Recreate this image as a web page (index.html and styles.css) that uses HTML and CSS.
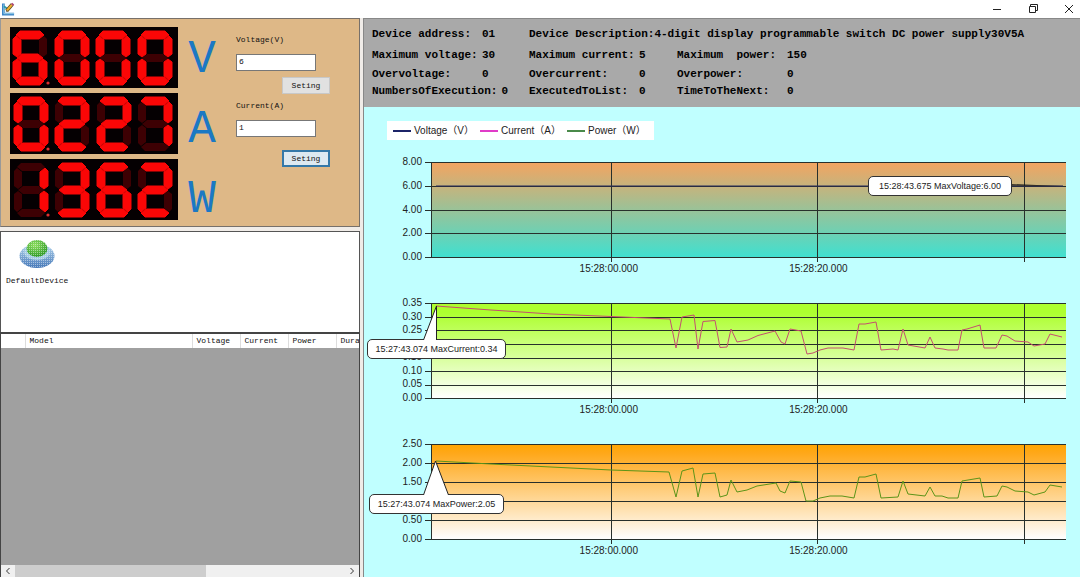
FILE: index.html
```html
<!DOCTYPE html>
<html lang="en">
<head>
<meta charset="utf-8">
<title>Power supply monitor</title>
<link rel="stylesheet" href="styles.css">
</head>
<body>
<svg class="defs" aria-hidden="true">
  <defs>
    <path id="sa" d="M3 4L7 0H27L31 4L26 8H8Z"/>
    <path id="sb" d="M34 8L31 5L26 9V23L30 26L34 23Z"/>
    <path id="sc" d="M34 31L30 28L26 31V45L31 49L34 46Z"/>
    <path id="sd" d="M3 50L7 54H27L31 50L26 46H8Z"/>
    <path id="se" d="M0 31L4 28L8 31V45L3 49L0 46Z"/>
    <path id="sf" d="M0 8L3 5L8 9V23L4 26L0 23Z"/>
    <path id="sg" d="M4 27L9 23H25L30 27L25 31H9Z"/>
    <g id="off" fill="#3d0003"><use href="#sa"/><use href="#sb"/><use href="#sc"/><use href="#sd"/><use href="#se"/><use href="#sf"/><use href="#sg"/></g>
    <g id="n0"><use href="#off"/><g fill="#fb0606" stroke="#fb0606"><use href="#sa"/><use href="#sb"/><use href="#sc"/><use href="#sd"/><use href="#se"/><use href="#sf"/></g></g>
    <g id="n1"><use href="#off"/><g fill="#fb0606" stroke="#fb0606"><use href="#sb"/><use href="#sc"/></g></g>
    <g id="n2"><use href="#off"/><g fill="#fb0606" stroke="#fb0606"><use href="#sa"/><use href="#sb"/><use href="#sg"/><use href="#se"/><use href="#sd"/></g></g>
    <g id="n3"><use href="#off"/><g fill="#fb0606" stroke="#fb0606"><use href="#sa"/><use href="#sb"/><use href="#sg"/><use href="#sc"/><use href="#sd"/></g></g>
    <g id="n6"><use href="#off"/><g fill="#fb0606" stroke="#fb0606"><use href="#sa"/><use href="#sf"/><use href="#sg"/><use href="#se"/><use href="#sc"/><use href="#sd"/></g></g>
    <g id="n7"><use href="#off"/><g fill="#fb0606" stroke="#fb0606"><use href="#sa"/><use href="#sb"/><use href="#sc"/></g></g>
    <circle id="dot" cx="38" cy="56" r="1.6" fill="#e03030"/>
  </defs>
</svg>

<div class="app">
  <header class="titlebar">
    <svg class="app-icon" viewBox="0 0 14 14" aria-hidden="true">
      <path d="M1.500 1V12.500H13" fill="none" stroke="#3c86c8" stroke-width="3"/>
      <path d="M2 2V12H13" fill="none" stroke="#9ad0e8" stroke-width="1"/>
      <path d="M2 4L6 7" stroke="#2c9aa8" stroke-width="2"/>
      <path d="M5 9L11 2" stroke="#5c4a20" stroke-width="4"/>
      <path d="M5 9L11 2" stroke="#f0b030" stroke-width="2.4"/>
      <path d="M10.300 1L12.500 3" stroke="#b04878" stroke-width="2"/>
      <path d="M4 10L5 8L6.500 9.500Z" fill="#333"/>
    </svg>
    <div class="window-buttons">
      <button type="button" aria-label="Minimize"><svg viewBox="0 0 10 10"><path d="M1 5.500H9"/></svg></button>
      <button type="button" aria-label="Restore"><svg viewBox="0 0 10 10"><path d="M1.500 2.500H7.500V8.500H1.500ZM2.500 2.500V0.500H9.500V6.500H7.500"/></svg></button>
      <button type="button" aria-label="Close"><svg viewBox="0 0 10 10"><path d="M1 1L9 9M9 1L1 9"/></svg></button>
    </div>
  </header>

  <main class="workspace">
    <div class="left">
      <section class="control">
        <div class="displays">
          <svg class="display" viewBox="0 0 168 61" role="img" aria-label="6.000 volts"><use href="#n6" x="3" y="4"/><use href="#n0" x="45" y="4"/><use href="#n0" x="86" y="4"/><use href="#n0" x="128" y="4"/><use href="#dot"/></svg>
          <svg class="display" viewBox="0 0 168 61" role="img" aria-label="0.227 amperes"><use href="#n0" x="4" y="4"/><use href="#n2" x="45" y="4"/><use href="#n2" x="87" y="4"/><use href="#n7" x="128" y="4"/><use href="#dot"/></svg>
          <svg class="display" viewBox="0 0 168 61" role="img" aria-label="1.362 watts"><use href="#n1" x="4" y="4"/><use href="#n3" x="45" y="4"/><use href="#n6" x="87" y="4"/><use href="#n2" x="128" y="4"/><use href="#dot"/></svg>
        </div>
        <div class="units"><span>V</span><span>A</span><span>W</span></div>
        <div class="settings">
          <form class="setting">
            <label for="voltage">Voltage(V)</label>
            <input id="voltage" type="text" value="6">
            <button type="button">Seting</button>
          </form>
          <form class="setting current">
            <label for="current">Current(A)</label>
            <input id="current" type="text" value="1">
            <button type="button" class="focused">Seting</button>
          </form>
        </div>
      </section>

      <section class="devices">
        <div class="device">
          <svg class="device-icon" viewBox="0 0 36 30" aria-hidden="true">
            <defs>
              <radialGradient id="dome" cx=".4" cy=".3" r=".7"><stop offset="0" stop-color="#8fe060"/><stop offset="1" stop-color="#2f9a28"/></radialGradient>
              <linearGradient id="disc" x2="0" y2="1"><stop offset="0" stop-color="#b4d6ee"/><stop offset="1" stop-color="#4678b8"/></linearGradient>
              <pattern id="dither" width="2" height="2" patternUnits="userSpaceOnUse"><rect width="1" height="1" fill="#fff" opacity=".45"/></pattern>
            </defs>
            <ellipse cx="18" cy="16" rx="17.500" ry="12" fill="url(#disc)"/>
            <ellipse cx="18" cy="12" rx="13" ry="8" fill="#a4cbe4"/>
            <ellipse cx="18" cy="8.500" rx="10.500" ry="8.500" fill="url(#dome)"/>
            <rect width="36" height="30" fill="url(#dither)"/>
          </svg>
          <span>DefaultDevice</span>
        </div>
      </section>

      <section class="program">
        <div class="table-view">
          <table>
            <thead><tr><th class="c-index"></th><th class="c-model">Model</th><th class="c-value">Voltage</th><th class="c-value">Current</th><th class="c-value">Power</th><th class="c-last">Duration</th></tr></thead>
          </table>
        </div>
        <div class="scrollbar">
          <button type="button" aria-label="Scroll left"><svg viewBox="0 0 8 8"><path d="M5.500 1L2.500 4L5.500 7"/></svg></button>
          <div class="track"><div class="thumb"></div></div>
          <button type="button" aria-label="Scroll right"><svg viewBox="0 0 8 8"><path d="M2.500 1L5.500 4L2.500 7"/></svg></button>
        </div>
      </section>
    </div>

    <div class="right">
      <dl class="info">
        <div><dt>Device address:</dt><dd>01</dd></div>
        <div class="wide"><dt>Device Description:</dt><dd>4-digit display programmable switch DC power supply30V5A</dd></div>
        <div><dt>Maximum voltage:</dt><dd>30</dd></div>
        <div><dt>Maximum current:</dt><dd>5</dd></div>
        <div><dt>Maximum&nbsp; power:</dt><dd>150</dd></div>
        <div><dt>Overvoltage:</dt><dd>0</dd></div>
        <div><dt>Overcurrent:</dt><dd>0</dd></div>
        <div><dt>Overpower:</dt><dd>0</dd></div>
        <div><dt>NumbersOfExecution:</dt><dd>0</dd></div>
        <div><dt>ExecutedToList:</dt><dd>0</dd></div>
        <div><dt>TimeToTheNext:</dt><dd>0</dd></div>
      </dl>

      <div class="charts">
        <ul class="legend">
          <li class="k-voltage">Voltage（V）</li>
          <li class="k-current">Current（A）</li>
          <li class="k-power">Power（W）</li>
        </ul>

        <section class="chart voltage">
          <ol class="y-axis"><li>8.00</li><li>6.00</li><li>4.00</li><li>2.00</li><li>0.00</li></ol>
          <div class="plot">
            <svg class="graph" viewBox="0 0 635 95" preserveAspectRatio="none">
              <path class="grid" d="M-6 0H635M-6 24H635M-6 48H635M-6 71H635M-6 95H635M0 0V95M180 0V100M386 0V100M593 0V100"/>
              <path class="series s-voltage" d="M5 24H632"/>
              <path class="wedge" d="M575 22L633 24L575 23.500Z"/>
            </svg>
            <div class="callout">15:28:43.675 MaxVoltage:6.00</div>
          </div>
          <div class="x-axis"><span>15:28:00.000</span><span>15:28:20.000</span></div>
        </section>

        <section class="chart current-chart">
          <ol class="y-axis"><li>0.35</li><li>0.30</li><li>0.25</li><li>0.20</li><li>0.15</li><li>0.10</li><li>0.05</li><li>0.00</li></ol>
          <div class="plot">
            <svg class="graph" viewBox="0 0 635 95" preserveAspectRatio="none">
              <path class="grid" d="M-6 0H635M-6 14H635M-6 27H635M-6 41H635M-6 55H635M-6 68H635M-6 82H635M-6 95H635M0 0V95M180 0V100M386 0V100M593 0V100"/>
              <path class="series s-current" d="M5 3L60 7L120 11L180 13.500L239 16L245 45L251 14L263 12L267 46L272 18.500L284 17.500L289 44.500L296 44L300 26L306 39L317 37L327 32.500L344 28L350 39L354 41L359 26L370 28L376 51L382 50L389 47L397 45H412L423 47L428 21L434 21L445 19L450 47L462 46L467 47L472 26L477 42L494 45L499 34L504 45L512 46L517 47H527L531 27L536 26L549 22L553 45H565L571 32L576 33L584 38L597 39L603 43L614 41L619 31L631 34"/>
            </svg>
            <div class="callout">15:27:43.074 MaxCurrent:0.34</div>
            <svg class="tail" viewBox="0 0 26 34"><path d="M0.500 34L13.500 0L13.500 34"/></svg>
          </div>
          <div class="x-axis"><span>15:28:00.000</span><span>15:28:20.000</span></div>
        </section>

        <section class="chart power">
          <ol class="y-axis"><li>2.50</li><li>2.00</li><li>1.50</li><li>1.00</li><li>0.50</li><li>0.00</li></ol>
          <div class="plot">
            <svg class="graph" viewBox="0 0 635 95" preserveAspectRatio="none">
              <path class="grid" d="M-6 0H635M-6 19H635M-6 38H635M-6 57H635M-6 76H635M-6 95H635M0 0V95M180 0V100M386 0V100M593 0V100"/>
              <path class="series s-power" d="M5 17L60 20L120 23L180 26L238 28L245 53L251 27L262 24L267 53L272 30L284 29L289 53L296 51L300 36L306 48L316 46L326 42L345 39L349 47L354 49L359 37L370 38L375 57H382L389 54L399 52H411L423 54L428 33H434L445 30L450 54L467 53L472 37L477 50L494 52L499 43L504 52H511L517 54H527L531 37L537 36L549 34L553 53L566 52L571 42L576 43L584 47L597 48L603 51L614 48L619 41L631 43"/>
            </svg>
            <div class="callout">15:27:43.074 MaxPower:2.05</div>
            <svg class="tail" viewBox="0 0 26 34"><path d="M0.500 34L12.500 0L25.500 34"/></svg>
          </div>
          <div class="x-axis"><span>15:28:00.000</span><span>15:28:20.000</span></div>
        </section>
      </div>
    </div>
  </main>
</div>
</body>
</html>
```
FILE: styles.css
```css
* { box-sizing: border-box; }
body { margin: 0; background: #fff; color: #111; font: 8px "Liberation Mono", monospace; }
ul, ol, dl, dd { margin: 0; padding: 0; list-style: none; }
button { padding: 0; border: 0; background: none; font: inherit; color: inherit; }
.defs { position: absolute; width: 0; height: 0; }

.app { display: flex; flex-direction: column; min-height: 100vh; }
.titlebar { display: flex; justify-content: space-between; align-items: center; height: 18px; padding: 0 6px 0 2px; }
.app-icon { width: 13px; height: 14px; }
.window-buttons { display: flex; gap: 26px; }
.window-buttons button { display: flex; width: 10px; height: 10px; }
.window-buttons svg { width: 10px; height: 10px; fill: none; stroke: #222; }

.workspace { flex: 1; display: grid; grid-template-columns: 360px minmax(0, 1fr); gap: 3px; background: #f0ece8; }
.left { display: flex; flex-direction: column; gap: 4px; }

.control { display: flex; padding: 8px 0 6px 9px; border: 1px solid #77706a; border-left-color: #999; background: #deb887; }
.displays { display: flex; flex-direction: column; gap: 5px; width: 168px; }
.display { display: block; width: 168px; height: 61px; background: #050002; }
.units { display: flex; flex-direction: column; width: 48px; height: 194px; margin-top: -2px; text-align: center; color: #1b78c4; font-size: 46px; line-height: 70px; }
.settings { display: flex; flex-direction: column; gap: 6px; width: 94px; margin: 7px 0 0 10px; }
.setting { display: flex; flex-direction: column; align-items: flex-start; }
.setting label { line-height: 12px; margin-bottom: 8px; }
.setting input { width: 80px; height: 17px; padding: 0 2px 2px; border: 1px solid #777; background: #fff; font: inherit; color: #111; }
.setting button { align-self: flex-end; width: 48px; height: 17px; margin-top: 6px; border: 1px solid #c8c8c8; background: #e1e1e1; }
.setting.current button { margin-top: 13px; }
.setting button.focused { border: 2px solid #3478a8; background: #dde9f1; }

.devices { height: 101px; margin-bottom: -4px; padding: 8px 5px; border: 1px solid #555; border-bottom: 0; background: #fff; }
.device { display: inline-flex; flex-direction: column; align-items: center; gap: 5px; line-height: 12px; }
.device-icon { width: 36px; height: 30px; }

.program { flex: 1; display: flex; flex-direction: column; border: 1px solid #444; border-top-width: 2px; border-bottom: 0; background: #a0a0a0; }
.table-view { flex: 1; overflow: hidden; }
table { width: 380px; table-layout: fixed; border-collapse: collapse; background: #fff; }
th { height: 14px; padding: 0 4px; border-right: 1px solid #ddd; text-align: left; font-weight: normal; line-height: 12px; }
.c-index { width: 24px; }
.c-model { width: 167px; }
.c-value { width: 48px; }
.c-last { width: 45px; }
.scrollbar { display: flex; align-items: center; height: 12px; background: #f0f0f0; }
.scrollbar button { display: flex; justify-content: center; width: 14px; }
.scrollbar svg { width: 8px; height: 8px; fill: none; stroke: #333; }
.track { flex: 1; height: 12px; }
.thumb { width: 58%; height: 12px; background: #cdcdcd; }

.right { display: flex; flex-direction: column; border-left: 1px solid #888; background: #c0ffff; }
.info { display: grid; grid-template-columns: 157px 148px 1fr; grid-template-rows: 22px 20px 18px 16px; padding: 4px 8px 8px; border-top: 1px solid #888; background: #a9a9a9; color: #000; font-size: 11px; font-weight: bold; }
.info > div { display: flex; align-items: center; white-space: nowrap; }
.info dt { min-width: 106px; }
.info dd { margin-left: 4px; }
.info .wide { grid-column: span 2; }
.info .wide dd { margin-left: 0; }

.charts { flex: 1; padding: 14px 14px 0 0; background: #c0ffff; font: 10px/12px "Liberation Sans", "Noto Sans CJK SC", sans-serif; color: #222; }
.legend { display: grid; grid-template-columns: repeat(3, 87px); align-items: center; width: 267px; height: 19px; margin: 0 0 22px 23px; padding-left: 6px; background: #fff; }
.legend li { display: flex; align-items: center; gap: 3px; white-space: nowrap; }
.legend li::before { content: ""; width: 18px; height: 2px; background: var(--key); }
.k-voltage { --key: #1c2468; }
.k-current { --key: #e03cc8; }
.k-power { --key: #4a8a4a; }

.chart { display: grid; grid-template-columns: 58px minmax(0, 1fr); column-gap: 9px; margin-bottom: 28px; }
.chart:last-child { margin-bottom: 0; }
.y-axis { display: flex; flex-direction: column; justify-content: space-between; margin: -6px 0; height: 107px; text-align: right; }
.plot { position: relative; height: 95px; }
.voltage .plot { background: linear-gradient(#f4a460, #40e0d0); }
.current-chart .plot { background: linear-gradient(#adff2f, #adff2f 10%, #fff); }
.power .plot { background: linear-gradient(#ffa500, #ffa81a 10%, #fff); }
.graph { display: block; width: 100%; height: 95px; overflow: visible; }
.graph path { vector-effect: non-scaling-stroke; }
.grid { fill: none; stroke: #28302c; shape-rendering: crispEdges; }
.series { fill: none; }
.s-voltage { stroke: #28285a; }
.s-current { stroke: #c4506e; }
.s-power { stroke: #5c9418; }
.wedge { fill: #111; }
.callout { position: absolute; height: 20px; border: 1px solid #333; border-radius: 5px; background: #fff; text-align: center; font-size: 9px; line-height: 18px; white-space: nowrap; }
.voltage .callout { right: 54px; top: 14px; width: 144px; }
.current-chart .callout { left: -64px; top: 36px; width: 139px; }
.power .callout { left: -62px; top: 50px; width: 135px; }
.tail { position: absolute; left: -8px; top: 3px; width: 26px; height: 34px; fill: #fff; stroke: #222; }
.power .tail { top: 17px; }
.x-axis { grid-column: 2; display: grid; grid-template-columns: 56% 10%; justify-items: center; margin-top: 6px; }
.x-axis span { white-space: nowrap; }
```
